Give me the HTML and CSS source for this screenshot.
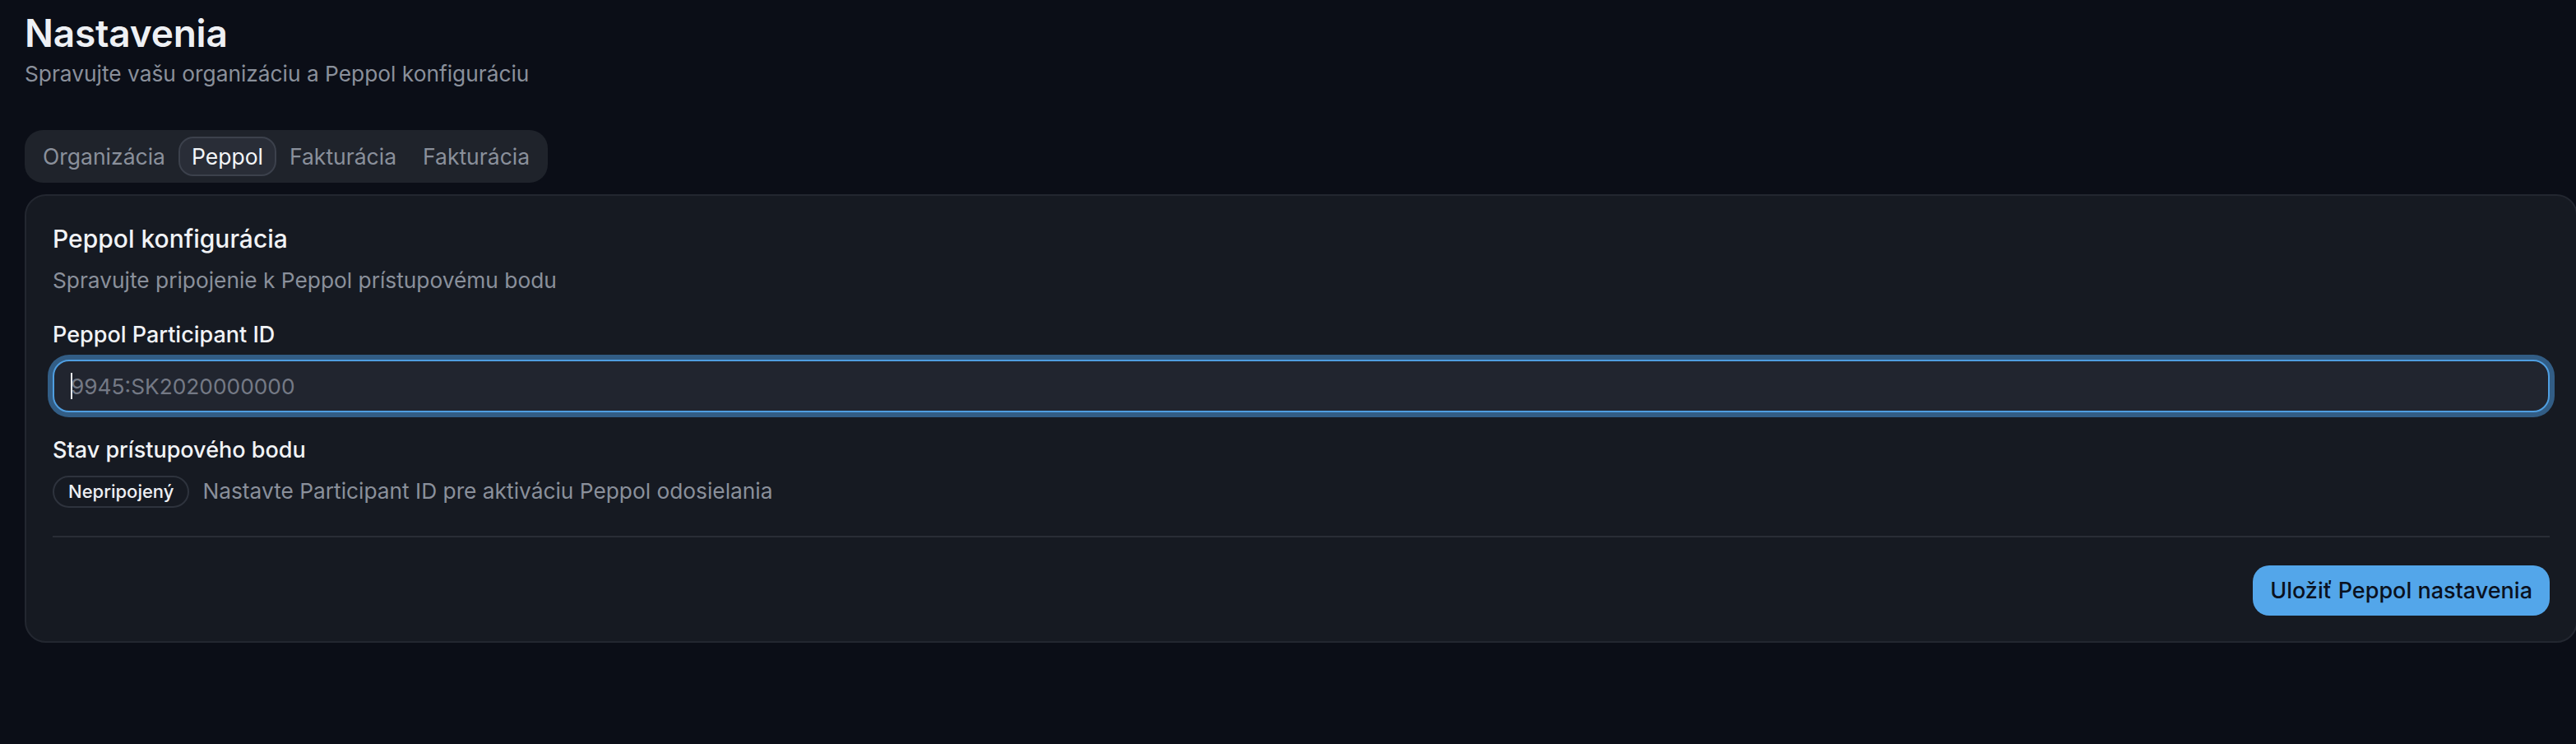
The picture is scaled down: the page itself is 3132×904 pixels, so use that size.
FILE: index.html
```html
<!DOCTYPE html>
<html lang="sk">
<head>
<meta charset="utf-8">
<title>Nastavenia</title>
<link rel="stylesheet" href="styles.css">
</head>
<body>
<main class="page">
  <header class="page-head">
    <h1 class="page-title">Nastavenia</h1>
    <p class="page-sub">Spravujte vašu organizáciu a Peppol konfiguráciu</p>
  </header>

  <nav class="tabs">
    <button class="tab">Organizácia</button>
    <button class="tab tab-active">Peppol</button>
    <button class="tab">Fakturácia</button>
    <button class="tab">Fakturácia</button>
  </nav>

  <section class="card">
    <div class="card-head">
      <h2 class="card-title">Peppol konfigurácia</h2>
      <p class="card-desc">Spravujte pripojenie k Peppol prístupovému bodu</p>
    </div>

    <div class="field">
      <label class="label" for="pid">Peppol Participant ID</label>
      <div class="input-wrap">
        <input id="pid" class="input input-focus" type="text" placeholder="9945:SK2020000000">
        <span class="caret"></span>
      </div>
    </div>

    <div class="field">
      <span class="label">Stav prístupového bodu</span>
      <div class="status-row">
        <span class="badge">Nepripojený</span>
        <span class="status-text">Nastavte Participant ID pre aktiváciu Peppol odosielania</span>
      </div>
    </div>

    <div class="card-foot">
      <button class="btn-primary">Uložiť Peppol nastavenia</button>
    </div>
  </section>
</main>
</body>
</html>
```

FILE: styles.css
```css
* { box-sizing: border-box; }

html, body {
  margin: 0;
  padding: 0;
  background: #0b0e17;
}

body {
  font-family: Inter, "Noto Sans", sans-serif;
  color: #f1f3f6;
  overflow: hidden;
}

.page {
  padding: 12px 0 0 30px;
  width: 3132px;
}

.page-head {
  display: flex;
  flex-direction: column;
}

.page-title {
  margin: 0;
  font-size: 46px;
  line-height: 56px;
  font-weight: 600;
  letter-spacing: -0.2px;
  color: #eef0f4;
}

.page-sub {
  margin: 2px 0 0;
  font-size: 26.3px;
  line-height: 40px;
  color: #8a909b;
}

.tabs {
  margin-top: 48px;
  display: inline-flex;
  align-items: center;
  padding: 8px 6px;
  height: 64px;
  background: #1f232b;
  border-radius: 22px;
}

.tab {
  font-family: inherit;
  font-size: 26.5px;
  line-height: 44px;
  height: 48px;
  padding: 0 14px;
  margin: 0;
  border: 2px solid transparent;
  border-radius: 18px;
  background: transparent;
  color: #8a909b;
  font-weight: 400;
  cursor: pointer;
}

.tab-active {
  background: #292d37;
  border-color: #3c414c;
  color: #f3f5f8;
}

.card {
  margin-top: 14px;
  width: 3104px;
  background: #161a22;
  border: 2px solid #232730;
  border-radius: 26px;
  padding: 32px 32px 31px;
  display: flex;
  flex-direction: column;
}

.card-head {
  display: flex;
  flex-direction: column;
}

.card-title {
  margin: 0;
  font-size: 30px;
  line-height: 40px;
  font-weight: 500;
  color: #f1f3f6;
}

.card-desc {
  margin: 11px 0 0;
  font-size: 26.3px;
  line-height: 40px;
  color: #8a909b;
}

.field {
  margin-top: 26px;
  display: flex;
  flex-direction: column;
  gap: 10px;
}

.label {
  font-size: 27px;
  line-height: 40px;
  font-weight: 500;
  color: #f1f3f6;
}

.input-wrap {
  position: relative;
}

.input {
  width: 100%;
  height: 64px;
  border-radius: 20px;
  border: 2px solid #2c313b;
  background: #21252f;
  color: #f1f3f6;
  font-family: inherit;
  font-size: 26.3px;
  padding: 0 20px;
  outline: none;
}

.input::placeholder {
  color: #747985;
}

.input-focus {
  border-color: #4f9ee0;
  box-shadow: 0 0 0 6px rgba(74, 150, 215, 0.55);
}

.caret {
  position: absolute;
  left: 22px;
  top: 16px;
  width: 2px;
  height: 32px;
  background: #e8ebf0;
}

.status-row {
  display: flex;
  align-items: center;
  gap: 16px;
}

.badge {
  display: inline-flex;
  align-items: center;
  height: 39px;
  padding: 0 17px;
  border: 2px solid #2e333d;
  border-radius: 999px;
  font-size: 22px;
  font-weight: 500;
  color: #eef0f4;
}

.status-text {
  font-size: 26.3px;
  line-height: 40px;
  color: #8a909b;
}

.card-foot {
  margin-top: 34px;
  border-top: 2px solid #292d36;
  padding-top: 34px;
  display: flex;
  justify-content: flex-end;
}

.btn-primary {
  height: 61px;
  padding: 0 21px;
  border: none;
  border-radius: 20px;
  background: #53a6ea;
  color: #0a1120;
  font-family: inherit;
  font-size: 27px;
  font-weight: 500;
  cursor: pointer;
}
```
